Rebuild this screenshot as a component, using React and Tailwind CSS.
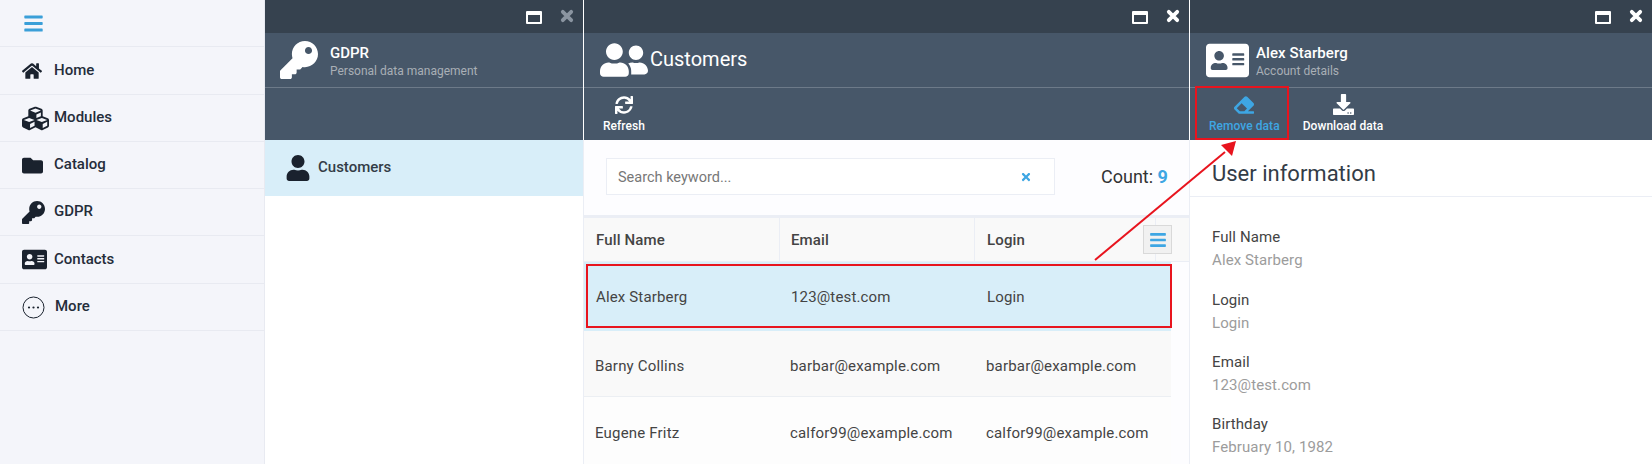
import React from "react";
import {
  FaHome, FaCubes, FaFolder, FaKey, FaAddressCard, FaUser, FaUserFriends,
  FaSync, FaTimes, FaEraser, FaDownload, FaBars,
} from "react-icons/fa";

const MoreIcon = () => (
  <svg width="23" height="23" viewBox="0 0 23 23" fill="none">
    <circle cx="11.5" cy="11.5" r="10.5" stroke="#1a222e" strokeWidth="1" />
    <circle cx="7" cy="11.5" r="1.1" fill="#1a222e" />
    <circle cx="11.5" cy="11.5" r="1.1" fill="#1a222e" />
    <circle cx="16" cy="11.5" r="1.1" fill="#1a222e" />
  </svg>
);

const WindowIcon = () => (
  <svg width="16" height="13" viewBox="0 0 16 13" className="text-white mt-[1px]">
    <path
      fillRule="evenodd"
      fill="currentColor"
      d="M1 0h14a1 1 0 0 1 1 1v11a1 1 0 0 1-1 1H1a1 1 0 0 1-1-1V1a1 1 0 0 1 1-1zM2 4v7h12V4z"
    />
  </svg>
);

const CloseIcon = ({ className }) => (
  <svg width="14" height="14" viewBox="0 0 14 14" className={`-mt-[1px] ${className}`}>
    <path d="M2.8 2.8L11.2 11.2M11.2 2.8L2.8 11.2" stroke="currentColor" strokeWidth="3.8" strokeLinecap="round" />
  </svg>
);

const nav = [
  { label: "Home", icon: <FaHome size={20} />, h: "h-[48px]", text: "" },
  { label: "Modules", icon: <FaCubes size={27} />, h: "h-[47px]", text: "-mt-[2px]" },
  { label: "Catalog", icon: <FaFolder size={21} />, h: "h-[47px]", text: "-mt-[2px]" },
  { label: "GDPR", icon: <FaKey size={23} />, h: "h-[47px]", text: "-mt-[2px]" },
  { label: "Contacts", icon: <FaAddressCard size={25} />, h: "h-[48px]", text: "" },
  { label: "More", icon: <MoreIcon />, h: "h-[47px]", text: "pl-px -mt-[2px]" },
];

function Sidebar() {
  return (
    <aside className="w-[265px] shrink-0 h-full bg-[#f4f5fa] border-r border-[#e8eaf1] flex flex-col">
      <div className="h-[47px] shrink-0 border-b border-[#e8eaf1] pl-[23px] flex items-center">
        <FaBars size={21} className="text-[#3a9fd8]" />
      </div>
      {nav.map((n) => (
        <div key={n.label} className={`${n.h} shrink-0 border-b border-[#e8eaf1] pl-[22px] flex items-center`}>
          <span className="w-[32px] shrink-0 flex items-center text-[#1a222e]">{n.icon}</span>
          <span className={`text-[15px] font-medium text-[#252d3a] ${n.text}`}>{n.label}</span>
        </div>
      ))}
    </aside>
  );
}

function TopBar({ closeClass = "text-white" }) {
  return (
    <div className="h-[33px] shrink-0 bg-[#36424f] flex items-center justify-end">
      <WindowIcon />
      <span className="ml-[18px] mr-[9px] flex">
        <CloseIcon className={closeClass} />
      </span>
    </div>
  );
}

function Head({ children, className = "" }) {
  return (
    <div className={`h-[55px] shrink-0 bg-[#475769] border-b border-[#6d7a89] flex items-center ${className}`}>
      {children}
    </div>
  );
}

function ToolButton({ icon, label, className = "" }) {
  return (
    <div className={`flex flex-col items-center ${className}`}>
      <div className="h-[25px] flex items-center justify-center">{icon}</div>
      <span className="text-[12px] font-medium tracking-[0.05px] leading-[16px] mt-[1px]">{label}</span>
    </div>
  );
}

function Field({ label, value, className = "" }) {
  return (
    <div className={`tracking-[0.1px] ${className}`}>
      <div className="text-[15px] leading-[20px] text-[#444]">{label}</div>
      <div className="text-[15px] leading-[20px] mt-[3px] text-[#9c9c9c]">{value}</div>
    </div>
  );
}

function GdprPanel() {
  return (
    <section className="w-[319px] shrink-0 h-full flex flex-col">
      <div className="border-r border-white flex flex-col">
        <TopBar closeClass="text-[#8b95a1]" />
        <Head className="pl-[15px]">
          <FaKey size={38} className="text-white" />
          <div className="ml-[12px]">
            <div className="text-[15px] font-medium leading-[20px] mt-[1px] text-white">GDPR</div>
            <div className="text-[12px] leading-[16px] text-[#a9afb6]">Personal data management</div>
          </div>
        </Head>
        <div className="h-[52px] bg-[#475769]" />
      </div>
      <div className="flex-1 border-r border-[#ebeef5] bg-white">
        <div className="h-[56px] bg-[#d8eef9] flex items-center pl-[20px]">
          <FaUser size={26} className="text-[#1a222e]" />
          <span className="ml-[7px] -mt-[2px] text-[15px] font-medium text-[#333c47]">Customers</span>
        </div>
      </div>
    </section>
  );
}

const rows = [
  { name: "Barny Collins", mail: "barbar@example.com", h: "h-[66px] pt-[5px]", bg: "bg-[#f9f9f9] border-b border-[#eceff3]" },
  { name: "Eugene Fritz", mail: "calfor99@example.com", h: "h-[67px] pt-[5px]", bg: "bg-[#fdfdfd]" },
];

function CustomersPanel() {
  return (
    <section className="w-[606px] shrink-0 h-full flex flex-col">
      <div className="border-r border-white flex flex-col">
        <TopBar />
        <Head className="pl-[16px]">
          <FaUserFriends size={48} className="text-white" />
          <span className="ml-[2px] -mt-[2px] text-[20px] text-white">Customers</span>
        </Head>
        <div className="h-[52px] bg-[#475769] flex items-start text-white pl-[19px] pt-[4px]">
          <ToolButton icon={<FaSync size={18} />} label="Refresh" />
        </div>
      </div>
      <div className="flex-1 relative min-h-0 border-r border-[#ebeef5] bg-[#fdfdff] flex flex-col">
        <div className="h-[75px] shrink-0 flex items-start pt-[18px] pl-[22px]">
          <div className="w-[449px] h-[37px] bg-white border border-[#ebeef5] flex items-center pl-[11px] pr-[22px]">
            <span className="flex-1 pt-[2px] text-[14.5px] text-[#777]">Search keyword...</span>
            <FaTimes size={12} className="text-[#3ea6e3]" />
          </div>
          <div className="ml-[46px] h-[37px] flex items-center text-[18px] text-[#333]">
            Count:&nbsp;<span className="font-bold text-[#3ea6e3]">9</span>
          </div>
        </div>
        <div className="h-[47px] shrink-0 bg-[#f9f9f9] border-t-[3px] border-b border-[#ebeef5] flex text-[15px] font-medium tracking-[0.15px] text-[#444]">
          <div className="w-[196px] pl-[12px] pt-[2px] flex items-center border-r border-[#ebeef5]">Full Name</div>
          <div className="w-[195px] pl-[11px] pt-[2px] flex items-center border-r border-[#ebeef5]">Email</div>
          <div className="w-[181px] pl-[12px] pt-[2px] flex items-center border-r border-[#ebeef5]">Login</div>
        </div>
        <div className="absolute left-[559px] top-[85px] w-[29px] h-[29px] bg-[#f1f1f1] border border-[#d9d9d9] flex items-center justify-center">
          <FaBars size={18} className="text-[#3ea6e3]" />
        </div>
        <div className="w-[587px] h-[69px] shrink-0 pt-[2px] bg-[#d8eef9] flex items-center text-[15px] tracking-[0.15px] text-[#444]">
          <div className="w-[196px] pl-[12px]">Alex Starberg</div>
          <div className="w-[196px] pl-[11px]">123@test.com</div>
          <div className="pl-[11px]">Login</div>
        </div>
        {rows.map((r) => (
          <div key={r.name} className={`w-[587px] ${r.h} shrink-0 ${r.bg} flex items-center text-[15px] tracking-[0.18px] text-[#444]`}>
            <div className="w-[196px] pl-[11px]">{r.name}</div>
            <div className="w-[196px] pl-[10px]">{r.mail}</div>
            <div className="pl-[10px]">{r.mail}</div>
          </div>
        ))}
      </div>
    </section>
  );
}

function AccountPanel() {
  return (
    <section className="flex-1 min-w-0 h-full flex flex-col">
      <TopBar />
      <Head className="pl-[16px]">
        <FaAddressCard size={43} className="text-white" />
        <div className="ml-[7px]">
          <div className="text-[15px] font-medium tracking-[0.08px] leading-[20px] mt-[1px] text-white">Alex Starberg</div>
          <div className="text-[12px] leading-[16px] text-[#a9afb6]">Account details</div>
        </div>
      </Head>
      <div className="h-[52px] bg-[#475769] flex items-start pl-[19px] pt-[4px]">
        <ToolButton icon={<FaEraser size={20} />} label="Remove data" className="text-[#3ea6e3]" />
        <ToolButton icon={<FaDownload size={21} />} label="Download data" className="text-white ml-[23px]" />
      </div>
      <div className="flex-1 min-h-0 bg-white overflow-hidden">
        <div className="h-[57px] border-b border-[#ebeef5] pl-[22px] pt-[10px] flex items-center text-[22px] text-[#333c47]">
          User information
        </div>
        <div className="pl-[22px] pt-[30px]">
          <Field label="Full Name" value="Alex Starberg" />
          <Field label="Login" value="Login" className="mt-[20px]" />
          <Field label="Email" value="123@test.com" className="mt-[19px]" />
          <Field label="Birthday" value="February 10, 1982" className="mt-[19px]" />
        </div>
      </div>
    </section>
  );
}

function Annotations() {
  return (
    <>
      <div className="absolute left-[586px] top-[264px] w-[586px] h-[64px] border-2 border-[#e8141e]" />
      <div className="absolute left-[1195px] top-[86px] w-[94px] h-[54px] border-2 border-[#e8141e]" />
      <svg className="absolute left-0 top-0 pointer-events-none" width="1652" height="464">
        <line x1="1095" y1="260" x2="1225" y2="152" stroke="#e8141e" strokeWidth="2" />
        <polygon points="1236,141 1221,145 1232,156" fill="#e8141e" />
      </svg>
    </>
  );
}

export default function App() {
  return (
    <div className="relative w-[1652px] h-[464px] overflow-hidden flex bg-white font-['Roboto',sans-serif]">
      <Sidebar />
      <GdprPanel />
      <CustomersPanel />
      <AccountPanel />
      <Annotations />
    </div>
  );
}
